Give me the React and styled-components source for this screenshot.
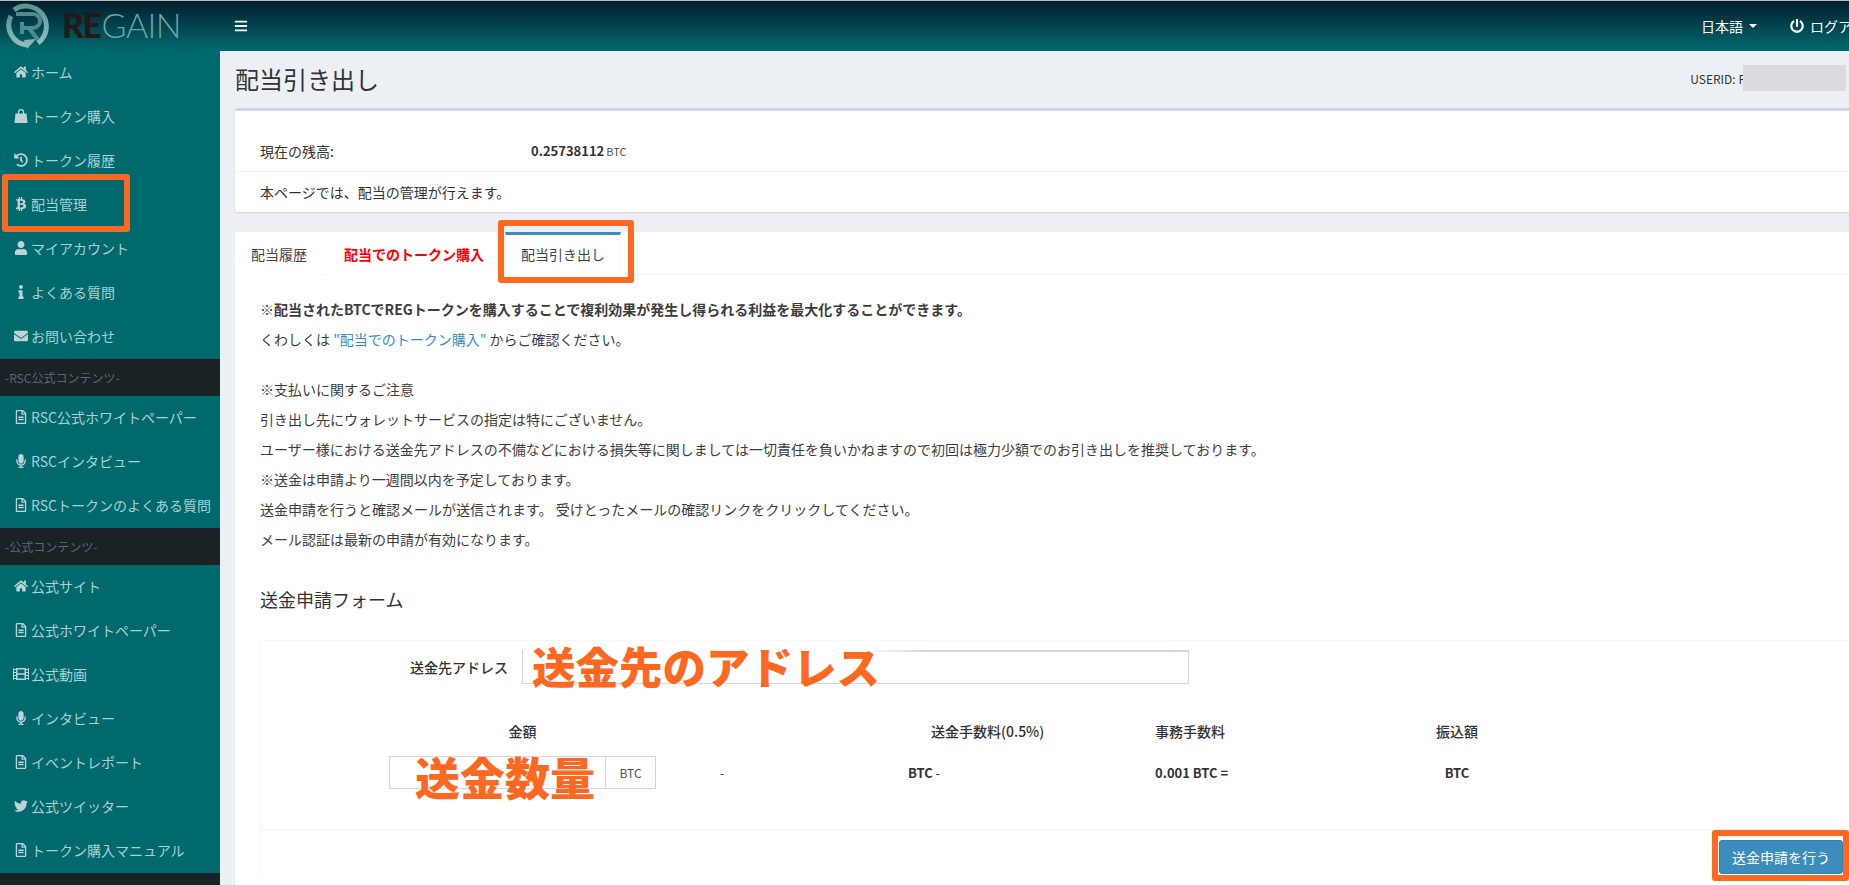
import React from "react";
import styled, { createGlobalStyle } from "styled-components";
import {
  FaHome, FaHistory, FaBtc, FaUser, FaInfo, FaEnvelope,
  FaRegFileAlt, FaMicrophone, FaFilm, FaTwitter, FaPowerOff, FaBars,
} from "react-icons/fa";

const Global = createGlobalStyle`
  html, body { margin: 0; padding: 0; height: 885px; overflow: hidden; background: #ecf0f5; }
  body { font-family: "Noto Sans CJK JP", "Noto Sans", sans-serif; font-size: 14px; color: #333; }
  * { box-sizing: border-box; }
`;

const Page = styled.div`
  width: 1882px;
  height: 885px;
  overflow: hidden;
  display: flex;
  flex-direction: column;
`;

const TopBar = styled.header`
  height: 51px;
  flex: none;
  display: flex;
  align-items: center;
  border-top: 1px solid #bdbdbd;
  background: linear-gradient(#021e2c, #006a70);
  color: #fff;
`;

const Brand = styled.div`
  width: 220px;
  flex: none;
  display: flex;
  align-items: center;
  padding-left: 6px;
  gap: 10px;
`;

const Wordmark = styled.div`
  font-family: "Lato", "Liberation Sans", sans-serif;
  font-size: 34px;
  line-height: 1;
  display: flex;
  color: #6ea3a5;
  font-weight: 300;
  letter-spacing: -0.6px;
  margin-top: -2px;
`;

const WordBold = styled.span`
  color: #231a18;
  font-weight: 900;
  letter-spacing: -1.5px;
  margin-right: 1px;
`;

const MenuToggle = styled.button`
  all: unset;
  display: flex;
  margin-left: 14px;
  color: #fff;
  font-size: 14px;
`;

const TopRight = styled.nav`
  margin-left: auto;
  display: flex;
  align-items: center;
  padding-right: 2px;
`;

const LangLink = styled.span`
  display: flex;
  align-items: center;
  gap: 6px;
  margin-right: 33px;
`;

const Caret = styled.i`
  width: 0;
  height: 0;
  border-left: 4px solid transparent;
  border-right: 4px solid transparent;
  border-top: 4px solid #fff;
`;

const LogoutLink = styled.span`
  display: flex;
  align-items: center;
  gap: 6px;
  white-space: nowrap;
`;

const Body = styled.div`
  flex: 1;
  min-height: 0;
  display: flex;
`;

const Sidebar = styled.aside`
  width: 220px;
  flex: none;
  background: #00696e;
  display: flex;
  flex-direction: column;
  overflow: hidden;
`;

const NavItem = styled.a`
  position: relative;
  height: 44px;
  flex: none;
  display: flex;
  align-items: center;
  padding: 0 0 2px 11px;
  color: #a9d0d2;
  white-space: nowrap;
`;

const NavIcon = styled.span`
  width: 20px;
  flex: none;
  display: flex;
  justify-content: center;
  font-size: 14px;
  color: #bcd4d6;
`;

const NavBand = styled.div`
  height: 37px;
  flex: none;
  background: #1a2226;
  color: #5b686e;
  font-size: 12px;
  display: flex;
  align-items: center;
  padding-left: 5px;
`;

const NavFoot = styled.div`
  flex: 1;
  background: #1a2226;
`;

const Main = styled.main`
  flex: 1;
  min-width: 0;
  padding-left: 15px;
  display: flex;
  flex-direction: column;
`;

const PageHead = styled.div`
  height: 57px;
  flex: none;
  display: flex;
  align-items: center;
  justify-content: space-between;
  padding: 0 36px 3px 0;
`;

const PageTitle = styled.h1`
  margin: 0;
  font-size: 24px;
  font-weight: 400;
  color: #333;
`;

const UserId = styled.div`
  display: flex;
  align-items: center;
  font-size: 12px;
  color: #333;
`;

const Redaction = styled.span`
  width: 103px;
  height: 26px;
  background: #d9dbdf;
  margin-left: -2px;
`;

const BalancePanel = styled.section`
  flex: none;
  background: #fff;
  border-top: 3px solid #d2d6de;
  border-radius: 3px;
  box-shadow: 0 1px 2px rgba(0, 0, 0, 0.12);
`;

const BalanceRow = styled.div`
  height: 61px;
  display: flex;
  align-items: flex-end;
  padding: 0 25px 10px;
  line-height: 20px;
  border-bottom: 1px solid #f4f4f4;
`;

const BalanceLabel = styled.span`
  width: 271px;
`;

const BalanceValue = styled.b`
  font-size: 13px;
  font-weight: 700;
`;

const Unit = styled.small`
  font-size: 11px;
  color: #555;
  margin-left: 2px;
`;

const PanelNote = styled.p`
  margin: 0;
  height: 40px;
  padding: 0 25px;
  line-height: 40px;
`;

const TabPanel = styled.section`
  flex: 1;
  margin-top: 20px;
  background: #fff;
  border-radius: 3px 3px 0 0;
`;

const TabBar = styled.div`
  height: 43px;
  display: flex;
  border-bottom: 1px solid #f4f4f4;
`;

const Tab = styled.a`
  position: relative;
  height: 43px;
  padding: 0 16px;
  margin-right: 5px;
  display: flex;
  align-items: center;
  white-space: nowrap;
  color: ${(p) => (p.$red ? "#f00" : "#444")};
  font-weight: ${(p) => (p.$red ? 700 : 400)};
  background: #fff;
  ${(p) =>
    p.$active &&
    `border-top: 3px solid #3c8dbc; border-left: 1px solid #f4f4f4; border-right: 1px solid #f4f4f4; padding: 0 15px 3px;`}
`;

const Highlight = styled.span`
  position: absolute;
  inset: ${(p) => p.$inset};
  width: ${(p) => (p.$w ? `${p.$w}px` : "auto")};
  border: 6px solid #ff6820;
  border-radius: 3px;
  pointer-events: none;
`;

const TabBody = styled.div`
  padding: 19px 0 0 25px;
`;

const Line = styled.p`
  margin: 0;
  line-height: 30px;
  white-space: nowrap;
  color: #3d3d3d;
`;

const Notice = styled.div`
  margin-bottom: 20px;
`;

const LinkText = styled.a`
  color: #3c8dbc;
`;

const FormTitle = styled.h3`
  margin: 30px 0 26px;
  font-size: 18px;
  font-weight: 400;
  line-height: 30px;
  color: #333;
`;

const FormBox = styled.div`
  border-left: 1px solid #f4f4f4;
  border-top: 1px solid #f8f8f8;
  margin-right: 27px;
`;

const FormMain = styled.div`
  height: 189px;
  border-bottom: 1px solid #f4f4f4;
  padding-top: 9px;
`;

const AddressRow = styled.div`
  display: flex;
  align-items: center;
  padding-left: 149px;
`;

const FieldLabel = styled.label`
  width: 112px;
  font-weight: 500;
  white-space: nowrap;
`;

const OverlayField = styled.div`
  position: relative;
`;

const AddressInput = styled.input`
  display: block;
  width: 667px;
  height: 34px;
  border: 1px solid #d2d6de;
  border-top-width: 2px;
  background: #fff;
  outline: none;
`;

const OverlayText = styled.span`
  position: absolute;
  left: ${(p) => p.$left}px;
  top: ${(p) => p.$top}px;
  font-size: ${(p) => p.$size}px;
  font-weight: 900;
  line-height: 1;
  color: #ff6820;
  white-space: nowrap;
  text-shadow: 0 0 2px rgba(255, 255, 255, 0.8);
`;

const TopMask = styled.span`
  position: absolute;
  left: 1px;
  top: 0;
  width: 400px;
  height: 2px;
  background: linear-gradient(90deg, #fff 85%, rgba(255, 255, 255, 0));
`;

const FeeRow = styled.div`
  display: flex;
  align-items: center;
  padding-left: 128px;
  margin-top: ${(p) => p.$top}px;
  height: ${(p) => p.$h}px;
`;

const FeeCell = styled.span`
  flex: none;
  width: ${(p) => p.$w}px;
  margin-left: ${(p) => p.$gap || 0}px;
  text-align: center;
  white-space: nowrap;
  font-size: ${(p) => p.$size || 14}px;
  font-weight: ${(p) => p.$weight || 400};
  color: #333;
`;

const AmountGroup = styled.div`
  position: relative;
  flex: none;
  width: 267px;
  height: 33px;
  display: flex;
  border: 1px solid #d2d6de;
`;

const AmountInput = styled.input`
  flex: 1;
  min-width: 0;
  border: none;
  outline: none;
  background: #fff;
`;

const AmountAddon = styled.span`
  width: 50px;
  flex: none;
  border-left: 1px solid #d2d6de;
  display: flex;
  align-items: center;
  justify-content: center;
  font-size: 12px;
  color: #555;
`;

const Strong = styled.b`
  font-weight: 700;
`;

const FormFoot = styled.div`
  display: flex;
  justify-content: flex-end;
  padding: 10px 12px 0 0;
`;

const SubmitWrap = styled.div`
  position: relative;
`;

const SubmitButton = styled.button`
  width: 124px;
  height: 34px;
  border: 1px solid #367fa9;
  border-radius: 3px;
  background: #3c8dbc;
  color: #fff;
  font: inherit;
  padding: 0;
`;

const LogoMark = () => (
  <svg width="46" height="48" viewBox="0 0 46 48" fill="none">
    <defs>
      <linearGradient id="ring" x1="0" y1="0" x2="0" y2="1">
        <stop offset="0" stopColor="#5b9496" />
        <stop offset="1" stopColor="#93bcbb" />
      </linearGradient>
    </defs>
    <path d="M8 8 A20 20 0 1 1 32 41" stroke="url(#ring)" strokeWidth="5" />
    <path d="M5 14 A20 20 0 0 0 21 43" stroke="url(#ring)" strokeWidth="5" />
    <path d="M21 47 L30 37 L18 38 Z" fill="#8ab6b6" />
    <path
      d="M10 12 H27 A7 7 0 0 1 27 26 H16 M16 20 V32 M23 26 L32 38"
      stroke="#4d8c8e"
      strokeWidth="4"
    />
  </svg>
);

const BagIcon = () => (
  <svg width="14" height="14" viewBox="0 0 14 14" fill="currentColor">
    <path d="M1.5 4.5h11l1 9.5H.5z" />
    <path d="M4.5 6V3.2a2.5 2.5 0 0 1 5 0V6" fill="none" stroke="currentColor" strokeWidth="1.2" />
  </svg>
);

const FilmIcon = () => <FaFilm size={16} />;

const mainNav = [
  [FaHome, "ホーム"],
  [BagIcon, "トークン購入"],
  [FaHistory, "トークン履歴"],
  [FaBtc, "配当管理", true],
  [FaUser, "マイアカウント"],
  [FaInfo, "よくある質問"],
  [FaEnvelope, "お問い合わせ"],
];
const rscNav = [
  [FaRegFileAlt, "RSC公式ホワイトペーパー"],
  [FaMicrophone, "RSCインタビュー"],
  [FaRegFileAlt, "RSCトークンのよくある質問"],
];
const officialNav = [
  [FaHome, "公式サイト"],
  [FaRegFileAlt, "公式ホワイトペーパー"],
  [FilmIcon, "公式動画"],
  [FaMicrophone, "インタビュー"],
  [FaRegFileAlt, "イベントレポート"],
  [FaTwitter, "公式ツイッター"],
  [FaRegFileAlt, "トークン購入マニュアル"],
];

const NavList = ({ items }) =>
  items.map(([Icon, label, marked]) => (
    <NavItem key={label}>
      <NavIcon>
        <Icon />
      </NavIcon>
      {label}
      {marked && <Highlight $inset="-9px auto -5px 2px" $w={128} />}
    </NavItem>
  ));

export default function App() {
  return (
    <Page>
      <Global />
      <TopBar>
        <Brand>
          <LogoMark />
          <Wordmark>
            <WordBold>RE</WordBold>GAIN
          </Wordmark>
        </Brand>
        <MenuToggle>
          <FaBars />
        </MenuToggle>
        <TopRight>
          <LangLink>
            日本語 <Caret />
          </LangLink>
          <LogoutLink>
            <FaPowerOff />
            ログアウト
          </LogoutLink>
        </TopRight>
      </TopBar>
      <Body>
        <Sidebar>
          <NavList items={mainNav} />
          <NavBand>-RSC公式コンテンツ-</NavBand>
          <NavList items={rscNav} />
          <NavBand>-公式コンテンツ-</NavBand>
          <NavList items={officialNav} />
          <NavFoot />
        </Sidebar>
        <Main>
          <PageHead>
            <PageTitle>配当引き出し</PageTitle>
            <UserId>
              USERID: F
              <Redaction />
            </UserId>
          </PageHead>
          <BalancePanel>
            <BalanceRow>
              <BalanceLabel>現在の残高:</BalanceLabel>
              <BalanceValue>0.25738112</BalanceValue>
              <Unit>BTC</Unit>
            </BalanceRow>
            <PanelNote>本ページでは、配当の管理が行えます。</PanelNote>
          </BalancePanel>
          <TabPanel>
            <TabBar>
              <Tab>配当履歴</Tab>
              <Tab $red>配当でのトークン購入</Tab>
              <Tab $active>
                配当引き出し
                <Highlight $inset="-15px -14px -8px -8px" />
              </Tab>
            </TabBar>
            <TabBody>
              <Notice>
                <Line>
                  <Strong>※配当されたBTCでREGトークンを購入することで複利効果が発生し得られる利益を最大化することができます。</Strong>
                </Line>
                <Line>
                  くわしくは <LinkText>"配当でのトークン購入"</LinkText> からご確認ください。
                </Line>
              </Notice>
              <Line>※支払いに関するご注意</Line>
              <Line>引き出し先にウォレットサービスの指定は特にございません。</Line>
              <Line>ユーザー様における送金先アドレスの不備などにおける損失等に関しましては一切責任を負いかねますので初回は極力少額でのお引き出しを推奨しております。</Line>
              <Line>※送金は申請より一週間以内を予定しております。</Line>
              <Line>送金申請を行うと確認メールが送信されます。 受けとったメールの確認リンクをクリックしてください。</Line>
              <Line>メール認証は最新の申請が有効になります。</Line>
              <FormTitle>送金申請フォーム</FormTitle>
              <FormBox>
                <FormMain>
                  <AddressRow>
                    <FieldLabel>送金先アドレス</FieldLabel>
                    <OverlayField>
                      <AddressInput />
                      <TopMask />
                      <OverlayText $left={10} $top={-6} $size={43.5}>送金先のアドレス</OverlayText>
                    </OverlayField>
                  </AddressRow>
                  <FeeRow $top={32} $h={30}>
                    <FeeCell $w={267} $weight={500}>金額</FeeCell>
                    <FeeCell $w={110} $gap={275} $weight={500}>送金手数料(0.5%)</FeeCell>
                    <FeeCell $w={70} $gap={114} $weight={500}>事務手数料</FeeCell>
                    <FeeCell $w={60} $gap={202} $weight={500}>振込額</FeeCell>
                  </FeeRow>
                  <FeeRow $top={10} $h={33}>
                    <AmountGroup>
                      <AmountInput />
                      <AmountAddon>BTC</AmountAddon>
                      <OverlayText $left={25} $top={-3} $size={45}>送金数量</OverlayText>
                    </AmountGroup>
                    <FeeCell $w={20} $gap={56} $size={12}>-</FeeCell>
                    <FeeCell $w={30} $gap={176} $size={13}><Strong>BTC</Strong> -</FeeCell>
                    <FeeCell $w={70} $gap={217} $size={13} $weight={700}>0.001 BTC =</FeeCell>
                    <FeeCell $w={60} $gap={202} $size={13} $weight={700}>BTC</FeeCell>
                  </FeeRow>
                </FormMain>
                <FormFoot>
                  <SubmitWrap>
                    <SubmitButton>送金申請を行う</SubmitButton>
                    <Highlight $inset="-10px -6px -7px -7px" />
                  </SubmitWrap>
                </FormFoot>
              </FormBox>
            </TabBody>
          </TabPanel>
        </Main>
      </Body>
    </Page>
  );
}
